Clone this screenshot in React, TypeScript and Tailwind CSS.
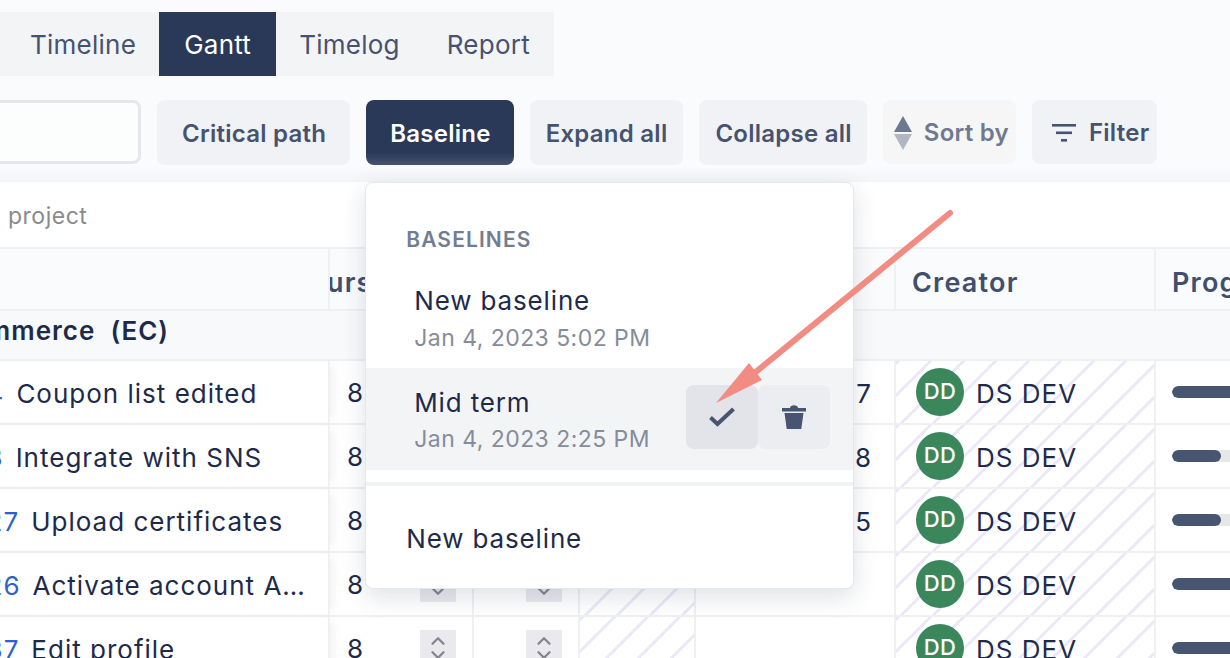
import { ChevronDown, ChevronUp } from 'lucide-react';

const tasks = [
  { id: '14', name: 'Coupon list edited', num: '7', progress: 100 },
  { id: '13', name: 'Integrate with SNS', num: '8', progress: 61 },
  { id: '127', name: 'Upload certificates', num: '5', progress: 61 },
  { id: '126', name: 'Activate account A…', num: '', progress: 100 },
  { id: '137', name: 'Edit profile', num: '', progress: 100 },
];

const columns = 'grid grid-cols-[530px_144px_106px_116px_200px_260px_274px]';
const hatch =
  'bg-[repeating-linear-gradient(135deg,#e9e9fa_0px,#e9e9fa_3px,#ffffff_3px,#ffffff_23px)]';
const toolButton =
  'h-[65px] pt-[2px] rounded-lg bg-[#f1f2f5] flex items-center text-[24px] tracking-[0.25px] font-semibold text-[#465270]';

function Spinner() {
  return (
    <div className="w-9 h-9 bg-[#e9e9ee] flex flex-col items-center justify-center text-[#85858f]">
      <ChevronUp size={22} strokeWidth={2.5} className="-mb-1" />
      <ChevronDown size={22} strokeWidth={2.5} className="-mt-1" />
    </div>
  );
}

function TaskRow({ task }: { task: (typeof tasks)[number] }) {
  return (
    <div className={`${columns} h-16 border-b-2 border-[#eff0f2] bg-white text-[26px] tracking-[1px] text-[#1e2a4a]`}>
      <div className="relative z-10 bg-white border-r-2 border-[#eff0f2] pl-[175px] pt-[2px] flex items-center gap-[12px] whitespace-nowrap shadow-[8px_0_10px_-6px_rgba(30,40,70,0.08)]">
        <span className="text-[#2f62c9]">{task.id}</span>
        <span>{task.name}</span>
      </div>
      <div className="border-r-2 border-[#eff0f2] flex items-center justify-between pl-[17px] pr-[16px]">
        <span>8</span>
        <Spinner />
      </div>
      <div className="border-r-2 border-[#eff0f2] flex items-center justify-end pr-[16px]">
        <Spinner />
      </div>
      <div className={`border-r-2 border-[#eff0f2] ${hatch}`} />
      <div className="border-r-2 border-[#eff0f2] pt-[2px] flex items-center justify-end pr-[22px]">{task.num}</div>
      <div className={`border-r-2 border-[#eff0f2] flex items-center pl-5 gap-[12px] ${hatch}`}>
        <div className="w-12 h-12 rounded-full bg-[#3b875c] text-white text-[22px] tracking-[0.3px] font-medium flex items-center justify-center -mt-[1px]">
          DD
        </div>
        <span className="pt-[2px]">DS DEV</span>
      </div>
      <div className="pl-4 flex items-center">
        <div className="w-20 h-3 rounded-full bg-[#e5e7eb] overflow-hidden -mt-[1px]">
          <div className="h-full rounded-full bg-[#475570]" style={{ width: `${task.progress}%` }} />
        </div>
      </div>
    </div>
  );
}

function BaselineMenu() {
  return (
    <div className="absolute top-[82px] -left-px z-30 w-[489px] h-[407px] bg-white rounded-lg border border-[#e5e7eb] shadow-[0_8px_24px_rgba(30,40,70,0.14)] text-[#1e2a4a] font-normal tracking-normal">
      <div className="pt-[45px] pl-[40px] h-[83px] text-[21px] font-semibold text-[#737d92] tracking-[1.1px] leading-6">
        BASELINES
      </div>
      <div className="h-[102px] pl-[48px] pt-[2px] flex flex-col justify-center gap-[7px]">
        <div className="text-[26px] tracking-[0.85px] leading-8">New baseline</div>
        <div className="text-[23px] tracking-[0.45px] leading-7 text-[#858c9b]">Jan 4, 2023 5:02 PM</div>
      </div>
      <div className="h-[102px] pl-[48px] pr-[23px] bg-[#f3f4f6] flex items-center justify-between">
        <div className="flex flex-col gap-[6px] pt-[2px]">
          <div className="text-[26px] tracking-[0.85px] leading-8">Mid term</div>
          <div className="text-[23px] tracking-[0.45px] leading-7 text-[#858c9b]">Jan 4, 2023 2:25 PM</div>
        </div>
        <div className="flex -mt-1">
          <button className="w-[72px] h-16 rounded-lg bg-[#e2e4e9] flex items-center justify-center">
            <svg width="26" height="20" viewBox="0 0 26 20" fill="none">
              <path d="M1.5 10.5l7 6.5L24.5 2" stroke="#475570" strokeWidth="4" />
            </svg>
          </button>
          <button className="w-[72px] h-16 rounded-lg bg-[#ecedf1] flex items-center justify-center">
            <svg width="24" height="24" viewBox="0 0 24 24">
              <path d="M0 3h24v3.4H0z M8 3c0-3.6 8-3.6 8 0z" fill="#475570" />
              <path d="M2.5 8h19l-2.2 16H4.7z" fill="#475570" />
            </svg>
          </button>
        </div>
      </div>
      <div className="mt-3 h-1 bg-[#f1f2f4]" />
      <div className="pl-[40px] pt-[37px] text-[26px] tracking-[0.85px] leading-8">New baseline</div>
    </div>
  );
}

export default function App() {
  return (
    <div className="relative w-[1230px] h-[658px] overflow-hidden bg-[#fafbfd] font-['Inter',sans-serif]">
      <div className="-ml-[200px] w-[1630px] pt-3">
        {/* tabs */}
        <div className="flex w-[754px] h-16 bg-[#f3f4f6] pl-[206px] text-[26px] tracking-[0.25px] text-[#465270]">
          <div className="pl-6 pr-[23px] flex items-center">Timeline</div>
          <div className="px-[25px] flex items-center bg-[#2a3958] text-white">Gantt</div>
          <div className="px-[23px] flex items-center">Timelog</div>
          <div className="px-6 flex items-center">Report</div>
        </div>

        {/* toolbar */}
        <div className="flex gap-4 mt-6">
          <div className="w-[341px] h-[64px] rounded-lg border-[3px] border-[#e5e7eb] bg-[#fcfdfd]" />
          <button className={`${toolButton} pl-[25px] pr-[24px]`}>Critical path</button>
          <div className="relative">
            <button className="h-[65px] pt-[2px] pl-6 pr-[23px] rounded-lg bg-gradient-to-b from-[#2a3958] from-80% to-[#46526f] text-white flex items-center text-[24px] tracking-[0.25px] font-semibold">
              Baseline
            </button>
            <BaselineMenu />
          </div>
          <button className={`${toolButton} px-4`}>Expand all</button>
          <button className={`${toolButton} pl-4 pr-[15px]`}>Collapse all</button>
          <button className="h-[64px] pt-[2px] pl-[11px] pr-[7px] rounded-lg bg-[#f6f6f7] flex items-center gap-[12px] text-[24px] tracking-[0.25px] font-semibold text-[#6f7a91]">
            <svg width="18" height="34" viewBox="0 0 18 34">
              <path d="M9 0l9 16H0z" fill="#6b7890" />
              <path d="M0 18h18L9 34z" fill="#b0b7c1" />
            </svg>
            Sort by
          </button>
          <button className="h-[64px] pt-[2px] pl-5 pr-2 rounded-lg bg-[#f1f2f5] flex items-center gap-[13px] text-[24px] tracking-[0.25px] font-semibold text-[#465270]">
            <svg width="24" height="20" viewBox="0 0 24 20" fill="#465270">
              <rect x="0" y="1" width="24" height="2.6" />
              <rect x="4" y="8.5" width="16" height="2.6" />
              <rect x="9" y="16" width="6" height="2.6" />
            </svg>
            Filter
          </button>
        </div>

        {/* table card */}
        <div className="mt-[17px] bg-white shadow-[0_-10px_14px_-4px_rgba(30,40,70,0.04)]">
          <div className="h-[67px] pt-[3px] border-b-2 border-[#eff0f2] pl-[208px] flex items-center text-[23px] tracking-[0.5px] text-[#8a8a8a]">
            project
          </div>
          <div className={`${columns} h-[62px] border-b-2 border-[#eff0f2] bg-[#fafbfd] text-[27px] tracking-[1.2px] font-semibold text-[#414f6d]`}>
            <div className="border-r-2 border-[#eff0f2]" />
            <div className="border-r-2 border-[#eff0f2] overflow-hidden pt-[9px] flex items-center">
              <span className="-ml-[42px]">Hours</span>
            </div>
            <div className="border-r-2 border-[#eff0f2]" />
            <div className="border-r-2 border-[#eff0f2]" />
            <div className="border-r-2 border-[#eff0f2]" />
            <div className="border-r-2 border-[#eff0f2] pl-[16px] pt-[9px] flex items-center">Creator</div>
            <div className="pl-4 pt-[9px] flex items-center">Progress</div>
          </div>
          <div className="h-[50px] pb-[10px] border-b-2 border-[#eff0f2] bg-[#f8f9fb] pl-[124px] flex items-center text-[26px] tracking-[1px] font-semibold text-[#1e2a4a] whitespace-pre">
            E-commerce  (EC)
          </div>
          {tasks.map(task => (
            <TaskRow key={task.id} task={task} />
          ))}
        </div>
      </div>

      {/* annotation arrow */}
      <svg className="absolute inset-0 z-40 pointer-events-none" width="1230" height="658" viewBox="0 0 1230 658">
        <path d="M950 213L752 375" stroke="#f28b82" strokeWidth="6" strokeLinecap="round" />
        <path d="M716 403L749 363L762 380z" fill="#f28b82" />
      </svg>
    </div>
  );
}
